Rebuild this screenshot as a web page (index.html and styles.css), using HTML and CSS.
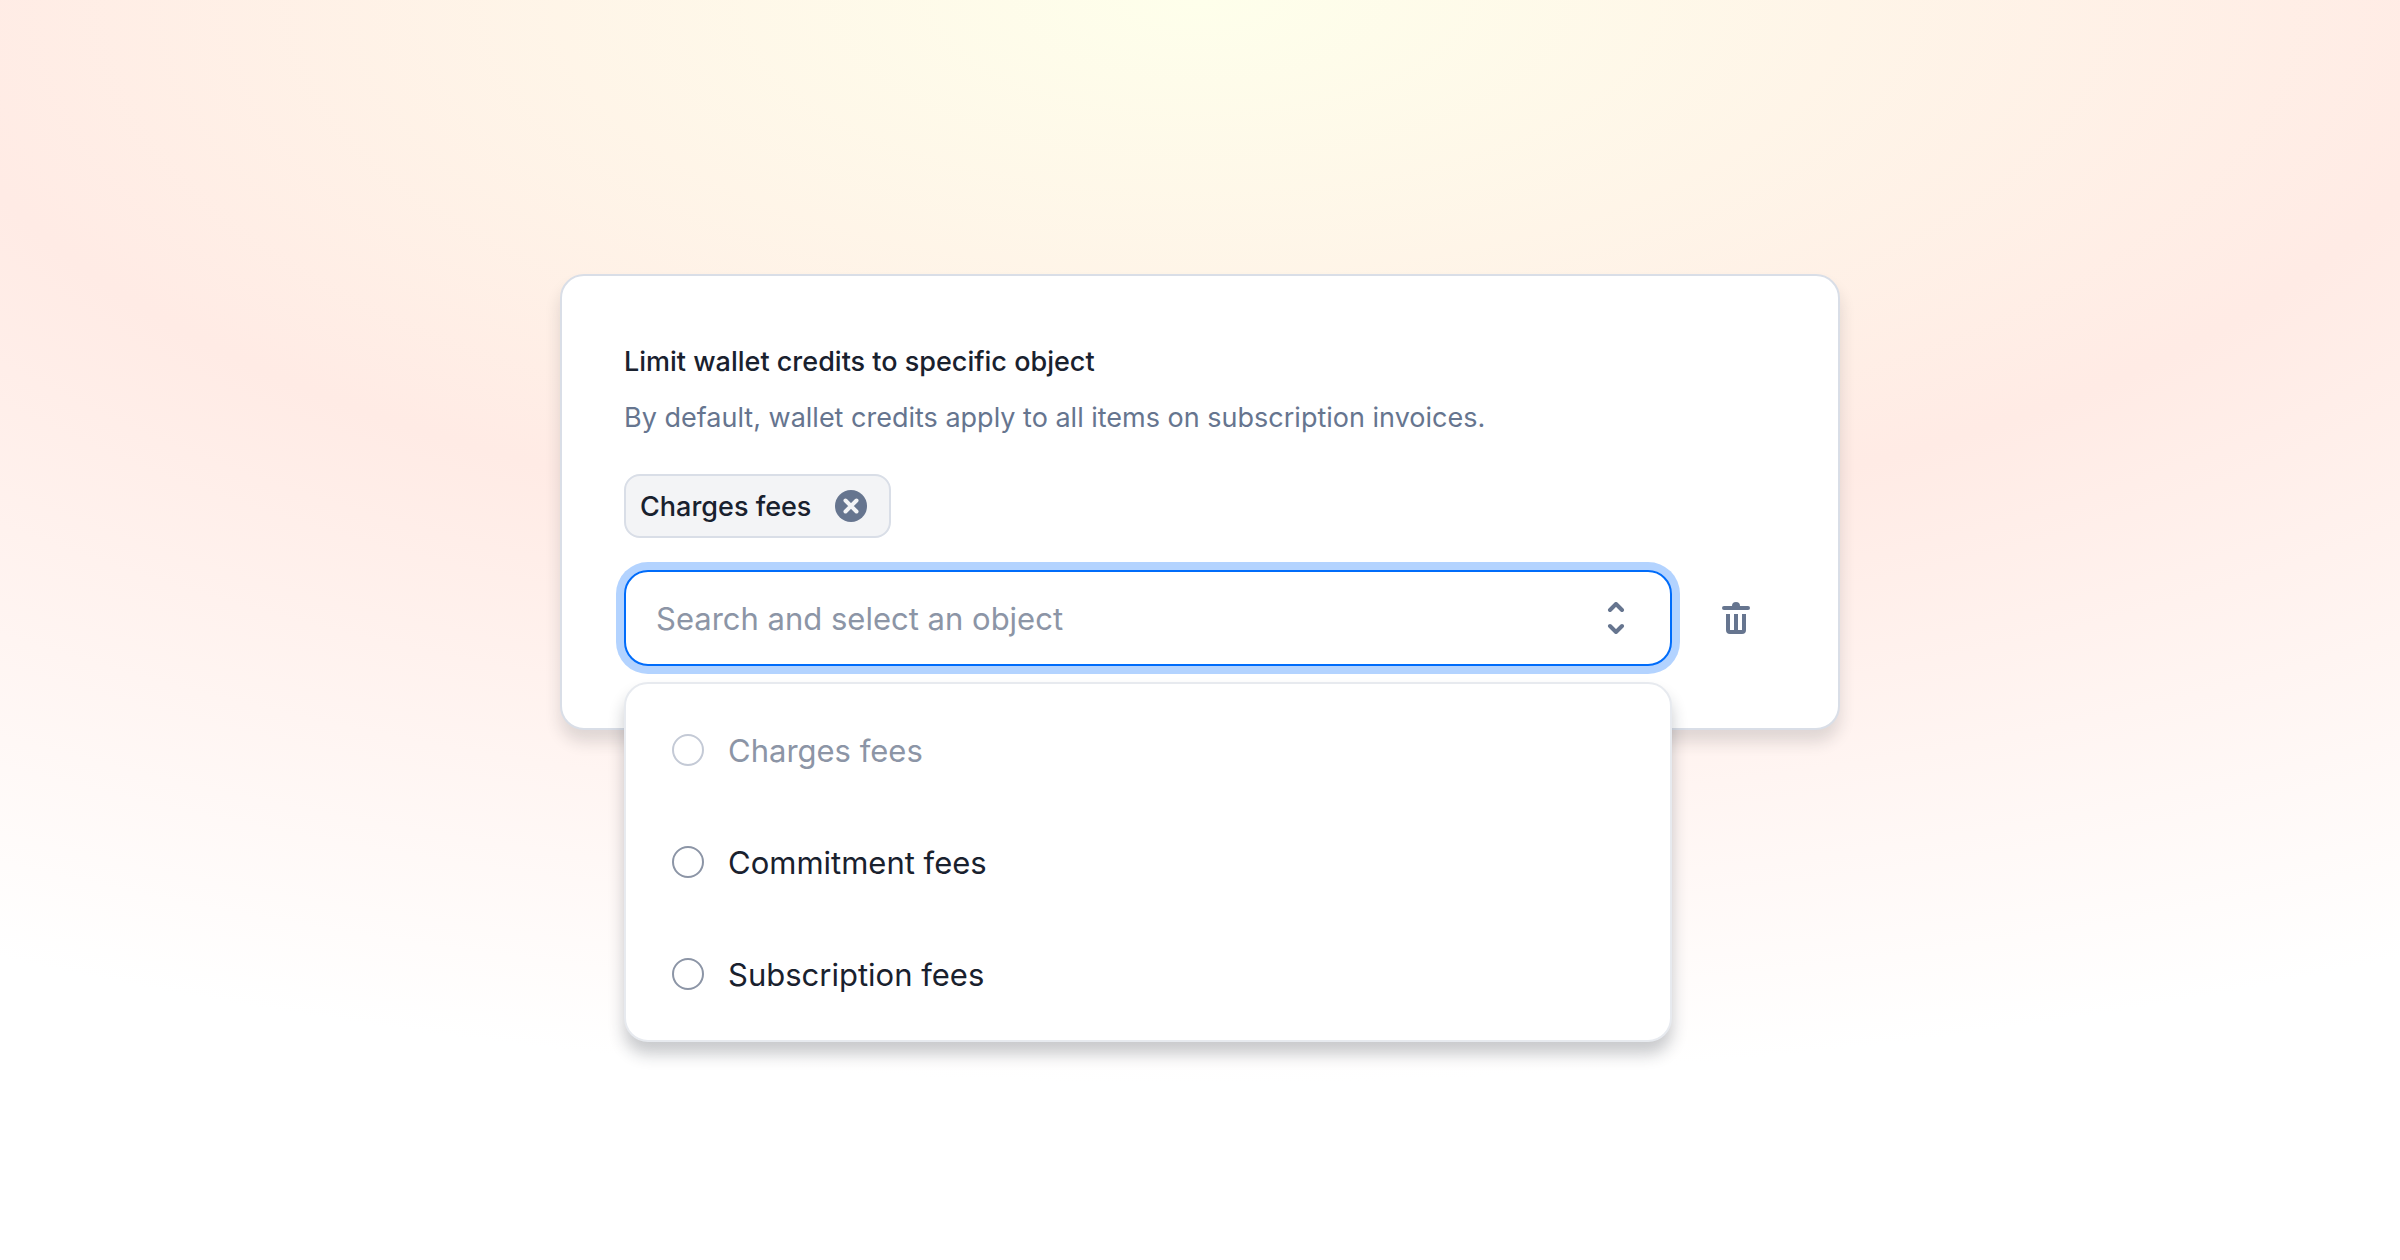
FILE: index.html
```html
<!DOCTYPE html>
<html lang="en">
<head>
<meta charset="utf-8">
<meta name="viewport" content="width=device-width, initial-scale=1">
<title>Limit wallet credits</title>
<link rel="stylesheet" href="styles.css">
</head>
<body>
<main class="stage">
  <section class="card" aria-labelledby="card-title">
    <header class="card-header">
      <h1 class="card-title" id="card-title">Limit wallet credits to specific object</h1>
      <p class="card-text">By default, wallet credits apply to all items on subscription invoices.</p>
    </header>
    <div class="chip">
      <span>Charges fees</span>
      <button class="icon-button" type="button" aria-label="Remove Charges fees">
        <svg class="icon" viewBox="0 0 32 32" aria-hidden="true">
          <circle cx="16" cy="16" r="16" fill="currentColor"/>
          <path d="M10.5 10.5l11 11M21.5 10.5l-11 11" fill="none" stroke="#f3f4f6" stroke-width="4" stroke-linecap="round"/>
        </svg>
      </button>
    </div>
    <div class="picker">
      <div class="combo">
        <div class="field">
          <input class="field-input" type="text" placeholder="Search and select an object" aria-label="Search and select an object">
          <button class="icon-button" type="button" aria-label="Toggle list">
            <svg class="icon" viewBox="0 0 32 32" aria-hidden="true">
              <path d="M10 8l6-6 6 6M10 24l6 6 6-6" fill="none" stroke="currentColor" stroke-width="4" stroke-linecap="round" stroke-linejoin="round"/>
            </svg>
          </button>
        </div>
        <div class="menu" role="radiogroup" aria-label="Objects">
          <label class="option option-disabled"><input class="radio" type="radio" name="object" disabled><span>Charges fees</span></label>
          <label class="option"><input class="radio" type="radio" name="object"><span>Commitment fees</span></label>
          <label class="option"><input class="radio" type="radio" name="object"><span>Subscription fees</span></label>
        </div>
      </div>
      <button class="icon-button delete" type="button" aria-label="Delete">
        <svg class="icon" viewBox="0 0 32 32" aria-hidden="true">
          <path d="M4 4h8a4 4 0 0 1 8 0h8a2 2 0 0 1 0 4H4a2 2 0 0 1 0-4z" fill="currentColor"/>
          <path d="M6 12h4v16h4V12h4v16h4V12h4v16a4 4 0 0 1-4 4H10a4 4 0 0 1-4-4z" fill="currentColor"/>
        </svg>
      </button>
    </div>
  </section>
</main>
</body>
</html>
```
FILE: styles.css
```css
* {
  box-sizing: border-box;
}

body {
  margin: 0;
  font-family: Inter, "Liberation Sans", sans-serif;
  color: #19212e;
}

.stage {
  min-height: 100vh;
  padding: 274px 32px 218px;
  background: radial-gradient(ellipse 107% 86% at 50% 0, #feffeb 0%, #ffebe5 50%, #ffffff 100%) #ffffff;
}

.card {
  max-width: 1280px;
  margin: 0 auto;
  padding: 62px;
  border: 2px solid #d9dee7;
  border-radius: 24px;
  background: #ffffff;
  box-shadow: 0 12px 16px rgba(25, 33, 46, 0.14);
}

.card-header {
  display: grid;
  gap: 8px;
  margin-bottom: 32px;
  font-size: 27px;
  line-height: 48px;
}

.card-title {
  margin: 0;
  font-size: inherit;
  font-weight: 500;
}

.card-text {
  margin: 0;
  color: #66758f;
}

.chip {
  display: flex;
  align-items: center;
  gap: 24px;
  width: fit-content;
  height: 64px;
  margin-bottom: 32px;
  padding: 0 22px 0 14px;
  border: 2px solid #d9dee7;
  border-radius: 16px;
  background: #f3f4f6;
  font-size: 27px;
  font-weight: 500;
}

.icon-button {
  display: flex;
  align-items: center;
  justify-content: center;
  flex: none;
  padding: 0;
  border: 0;
  background: none;
  color: #66758f;
  cursor: pointer;
}

.icon {
  display: block;
  width: 32px;
  height: 32px;
}

.picker {
  display: flex;
  gap: 24px;
}

.combo {
  position: relative;
  flex: 1;
  min-width: 0;
}

.field {
  display: flex;
  align-items: center;
  gap: 16px;
  height: 96px;
  padding: 0 38px 0 30px;
  border: 2px solid #006cfa;
  border-radius: 24px;
  background: #ffffff;
  box-shadow: 0 0 0 8px #b3d3ff;
}

.field-input {
  flex: 1;
  min-width: 0;
  padding: 0;
  border: 0;
  outline: 0;
  background: none;
  font: inherit;
  font-size: 31px;
  color: inherit;
}

.field-input::placeholder {
  color: #8c95a6;
  opacity: 1;
}

.delete {
  width: 80px;
}

.menu {
  position: absolute;
  top: calc(100% + 16px);
  left: 0;
  right: 0;
  padding: 10px 0;
  border: 2px solid #e7eaef;
  border-radius: 24px;
  background: #ffffff;
  box-shadow: 0 12px 16px rgba(25, 33, 46, 0.24);
}

.option {
  display: flex;
  align-items: center;
  gap: 24px;
  height: 112px;
  padding: 0 46px;
  font-size: 31px;
}

.radio {
  flex: none;
  width: 32px;
  height: 32px;
  margin: 0;
  appearance: none;
  border: 2px solid #8c95a6;
  border-radius: 50%;
  background: #ffffff;
}

.option-disabled {
  color: #8c95a6;
}

.option-disabled .radio {
  border-color: #c4cad6;
}
```
